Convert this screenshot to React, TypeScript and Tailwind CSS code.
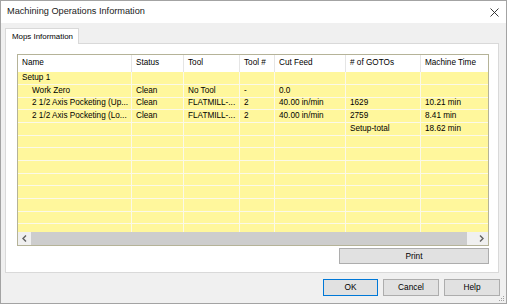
import React from "react";

const cols = [
    { key: "name", label: "Name", w: "w-[114px]" },
    { key: "status", label: "Status", w: "w-[52px]" },
    { key: "tool", label: "Tool", w: "w-[56px]" },
    { key: "num", label: "Tool #", w: "w-[35px]" },
    { key: "feed", label: "Cut Feed", w: "w-[71px]" },
    { key: "gotos", label: "# of GOTOs", w: "w-[75px]" },
    { key: "time", label: "Machine Time", w: "w-[67px]" },
];

type Row = { name?: string; indent?: boolean; status?: string; tool?: string; num?: string; feed?: string; gotos?: string; time?: string };

const data: Row[] = [
    { name: "Setup 1" },
    { name: "Work Zero", indent: true, status: "Clean", tool: "No Tool", num: "-", feed: "0.0" },
    { name: "2 1/2 Axis Pocketing (Up...", indent: true, status: "Clean", tool: "FLATMILL-...", num: "2", feed: "40.00 in/min", gotos: "1629", time: "10.21 min" },
    { name: "2 1/2 Axis Pocketing (Lo...", indent: true, status: "Clean", tool: "FLATMILL-...", num: "2", feed: "40.00 in/min", gotos: "2759", time: "8.41 min" },
    { gotos: "Setup-total", time: "18.62 min" },
];

const rows: Row[] = [...data, ...Array.from({ length: 8 }, () => ({}))];

const Chevron = ({ dir }: { dir: "left" | "right" }) => (
    <svg width="5" height="7" viewBox="0 0 5 7">
        <path
            d={dir === "left" ? "M4 0.5 L1 3.5 L4 6.5" : "M1 0.5 L4 3.5 L1 6.5"}
            fill="none"
            stroke="#606060"
            strokeWidth="1.4"
        />
    </svg>
);

const Button = ({ label, primary = false, w }: { label: string; primary?: boolean; w: string }) => (
    <div
        className={`${w} h-[17px] flex items-center justify-center bg-[#e1e1e1] border ${primary ? "border-[#0078d7]" : "border-[#adadad]"} text-[8.3px] text-black`}
    >
        {label}
    </div>
);

export default function App() {
    return (
        <div className="w-[507px] h-[304px] flex flex-col border border-[#a3a3a3] bg-[#f0f0f0] font-['Liberation_Sans',Arial,sans-serif] text-black overflow-hidden">
            {/* title bar */}
            <div className="h-[22px] bg-white flex items-center justify-between pl-[6px] pr-[7px] shrink-0">
                <span className="text-[9.2px] text-[#1a1a1a]">Machining Operations Information</span>
                <svg width="9" height="9" viewBox="0 0 9 9">
                    <path d="M0.5 0.5 L8.5 8.5 M8.5 0.5 L0.5 8.5" stroke="#222" strokeWidth="0.9" />
                </svg>
            </div>

            <div className="flex flex-col px-[4px] pt-[5px] relative flex-1">
                {/* tab */}
                <div className="w-[74px] h-[16px] bg-white border border-[#d9d9d9] border-b-0 flex items-center pl-[6px] text-[7.9px] relative z-10 -mb-px">
                    Mops Information
                </div>

                {/* tab panel */}
                <div className="w-[494px] h-[230px] bg-white border border-[#d9d9d9] pl-[11px] pt-[10px] flex flex-col">
                    {/* grid */}
                    <div className="w-[472px] h-[192px] border border-[#b5b398] bg-[#fff79c] flex flex-col text-[8.2px]">
                        <div className="h-[17px] bg-white flex shrink-0">
                            {cols.map((c) => (
                                <div key={c.key} className={`${c.w} h-full flex items-center pl-[4px] border-r border-[#e5e5e5] last:border-r-0 whitespace-nowrap overflow-hidden`}>
                                    {c.label}
                                </div>
                            ))}
                        </div>
                        <div className="h-[160px] overflow-hidden flex flex-col">
                            {rows.map((r, i) => (
                                <div key={i} className={`${i % 3 === 2 ? "h-[12px]" : "h-[13px]"} shrink-0 flex border-b border-[#fbf9e8]`}>
                                    {cols.map((c) => (
                                        <div
                                            key={c.key}
                                            className={`${c.w} h-full flex items-center ${c.key === "name" && r.indent ? "pl-[14px]" : "pl-[4px]"} border-r border-[#fbf9e8] last:border-r-0 whitespace-nowrap overflow-hidden`}
                                        >
                                            {(r as Record<string, string | boolean | undefined>)[c.key] as string}
                                        </div>
                                    ))}
                                </div>
                            ))}
                        </div>
                        {/* horizontal scroll bar */}
                        <div className="h-[13px] flex bg-[#f0f0f0] shrink-0">
                            <div className="w-[13px] h-full flex items-center justify-center">
                                <Chevron dir="left" />
                            </div>
                            <div className="w-[436px] h-full bg-[#cdcdcd]" />
                            <div className="flex-1" />
                            <div className="w-[14px] h-full flex items-center justify-center">
                                <Chevron dir="right" />
                            </div>
                        </div>
                    </div>

                    <div className="w-[472px] flex justify-end mt-[2px]">
                        <div className="w-[150px] h-[16px] flex items-center justify-center bg-[#e1e1e1] border border-[#adadad] text-[8.3px]">
                            Print
                        </div>
                    </div>
                </div>

                {/* dialog buttons */}
                <div className="flex justify-end gap-[5px] pr-[2px] mt-[6px]">
                    <Button label="OK" primary w="w-[55px]" />
                    <Button label="Cancel" w="w-[56px]" />
                    <Button label="Help" w="w-[56px]" />
                </div>

                {/* size grip */}
                <svg className="absolute right-[1px] bottom-[1px]" width="7" height="7" viewBox="0 0 7 7">
                    <rect x="5" y="1" width="1" height="1" fill="#a0a0a0" />
                    <rect x="3" y="3" width="1" height="1" fill="#a0a0a0" />
                    <rect x="5" y="3" width="1" height="1" fill="#a0a0a0" />
                    <rect x="1" y="5" width="1" height="1" fill="#a0a0a0" />
                    <rect x="3" y="5" width="1" height="1" fill="#a0a0a0" />
                    <rect x="5" y="5" width="1" height="1" fill="#a0a0a0" />
                </svg>
            </div>
        </div>
    );
}
